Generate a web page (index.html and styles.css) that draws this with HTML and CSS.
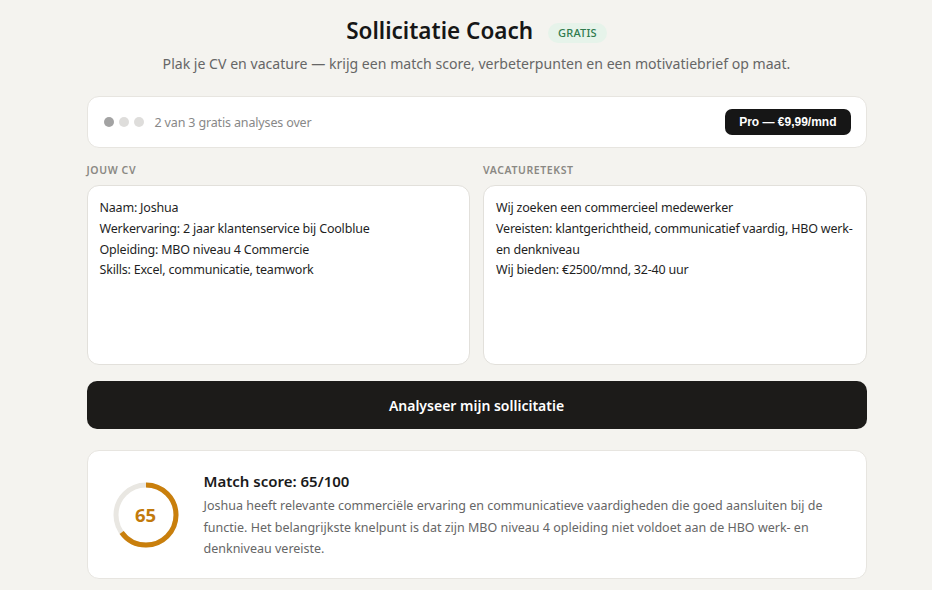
FILE: index.html
```html
<!DOCTYPE html>
<html lang="nl">
<head>
<meta charset="utf-8">
<title>Sollicitatie Coach</title>
<link rel="stylesheet" href="styles.css">
</head>
<body>
<div class="wrap">
  <header class="head">
    <div class="title-row">
      <h1 class="title">Sollicitatie Coach</h1>
      <span class="badge">GRATIS</span>
    </div>
    <p class="subtitle">Plak je CV en vacature — krijg een match score, verbeterpunten en een motivatiebrief op maat.</p>
  </header>

  <section class="card status">
    <div class="status-left">
      <span class="dot dot-used"></span>
      <span class="dot"></span>
      <span class="dot"></span>
      <span class="status-text">2 van 3 gratis analyses over</span>
    </div>
    <button class="pro">Pro — €9,99/mnd</button>
  </section>

  <section class="inputs">
    <div class="field">
      <div class="label">JOUW CV</div>
      <div class="box">
        <div>Naam: Joshua</div>
        <div>Werkervaring: 2 jaar klantenservice bij Coolblue</div>
        <div>Opleiding: MBO niveau 4 Commercie</div>
        <div>Skills: Excel, communicatie, teamwork</div>
      </div>
    </div>
    <div class="field">
      <div class="label">VACATURETEKST</div>
      <div class="box">
        <div>Wij zoeken een commercieel medewerker</div>
        <div>Vereisten: klantgerichtheid, communicatief vaardig, HBO werk- en denkniveau</div>
        <div>Wij bieden: €2500/mnd, 32-40 uur</div>
      </div>
    </div>
  </section>

  <button class="analyse">Analyseer mijn sollicitatie</button>

  <section class="card result">
    <div class="ring">
      <svg width="66" height="66" viewBox="0 0 66 66">
        <circle cx="33" cy="33" r="30" fill="none" stroke="#e9e7e2" stroke-width="5"/>
        <circle cx="33" cy="33" r="30" fill="none" stroke="#c97f0c" stroke-width="5" stroke-dasharray="122.5 188.5" transform="rotate(-90 33 33)"/>
      </svg>
      <span class="ring-num">65</span>
    </div>
    <div class="result-body">
      <h2 class="result-title">Match score: 65/100</h2>
      <p class="result-text">Joshua heeft relevante commerciële ervaring en communicatieve vaardigheden die goed aansluiten bij de functie. Het belangrijkste knelpunt is dat zijn MBO niveau 4 opleiding niet voldoet aan de HBO werk- en denkniveau vereiste.</p>
    </div>
  </section>
</div>
</body>
</html>
```

FILE: styles.css
```css
* { box-sizing: border-box; }
html, body { margin: 0; }
body {
  background: #f4f3ef;
  font-family: "Noto Sans", "Open Sans", sans-serif;
  color: #1a1a1a;
  padding-left: 21px;
}
.wrap {
  width: 780px;
  margin: 0 auto;
  padding-top: 15px;
}
.head { text-align: center; }
.title-row {
  display: flex;
  justify-content: center;
  align-items: center;
  gap: 15px;
}
.title {
  margin: 0;
  font-size: 22.5px;
  font-weight: 600;
  line-height: 32px;
  color: #161616;
}
.badge {
  background: #e6f3ea;
  color: #2f7a4d;
  font-size: 11px;
  font-weight: 500;
  padding: 2px 10px 3px;
  border-radius: 10px;
  letter-spacing: 0.2px;
  margin-top: 4px;
}
.subtitle {
  margin: 7px 0 0;
  font-size: 14.1px;
  color: #666;
  line-height: 20px;
}
.card {
  background: #fff;
  border: 1px solid #e7e5e0;
  border-radius: 12px;
}
.status {
  margin-top: 22px;
  height: 52px;
  display: flex;
  align-items: center;
  justify-content: space-between;
  padding: 0 15px 0 16px;
}
.status-left {
  display: flex;
  align-items: center;
  gap: 5px;
}
.dot {
  width: 10px;
  height: 10px;
  border-radius: 50%;
  background: #dedddb;
}
.dot-used { background: #a3a3a3; }
.status-text {
  margin-left: 6px;
  font-size: 12.5px;
  letter-spacing: -0.15px;
  color: #888;
}
.pro {
  background: #161616;
  color: #fff;
  border: none;
  border-radius: 7px;
  font-family: "Liberation Sans", Arial, sans-serif;
  font-weight: 700;
  font-size: 12px;
  height: 26px;
  padding: 0 14px;
}
.inputs {
  margin-top: 15px;
  display: grid;
  grid-template-columns: 1fr 1fr;
  gap: 13px;
}
.label {
  font-size: 10.5px;
  font-weight: 600;
  color: #8a8883;
  letter-spacing: 0.6px;
  line-height: 14px;
  margin-bottom: 8px;
}
.box {
  background: #fff;
  border: 1px solid #e2e0db;
  border-radius: 12px;
  height: 180px;
  padding: 12px 12px;
  font-size: 12.5px;
  letter-spacing: -0.2px;
  line-height: 20.8px;
  color: #1f1f1f;
}
.analyse {
  display: block;
  width: 100%;
  margin-top: 16px;
  height: 48px;
  background: #1c1b19;
  color: #fff;
  border: none;
  border-radius: 10px;
  font-family: "Noto Sans", sans-serif;
  font-weight: 600;
  font-size: 14px;
}
.result {
  margin-top: 21px;
  display: flex;
  align-items: center;
  gap: 25px;
  padding: 19px 30px 18px 25px;
  min-height: 128px;
}
.ring {
  position: relative;
  width: 66px;
  height: 66px;
  flex: none;
}
.ring svg { display: block; }
.ring-num {
  position: absolute;
  inset: 0;
  display: flex;
  align-items: center;
  justify-content: center;
  font-size: 18.5px;
  font-weight: 700;
  color: #c27a0c;
}
.result-body { flex: 1; }
.result-title {
  margin: 0 0 3px;
  font-size: 15px;
  font-weight: 600;
  line-height: 22px;
}
.result-text {
  margin: 0;
  font-size: 12.5px;
  line-height: 21.5px;
  color: #666;
}
```
